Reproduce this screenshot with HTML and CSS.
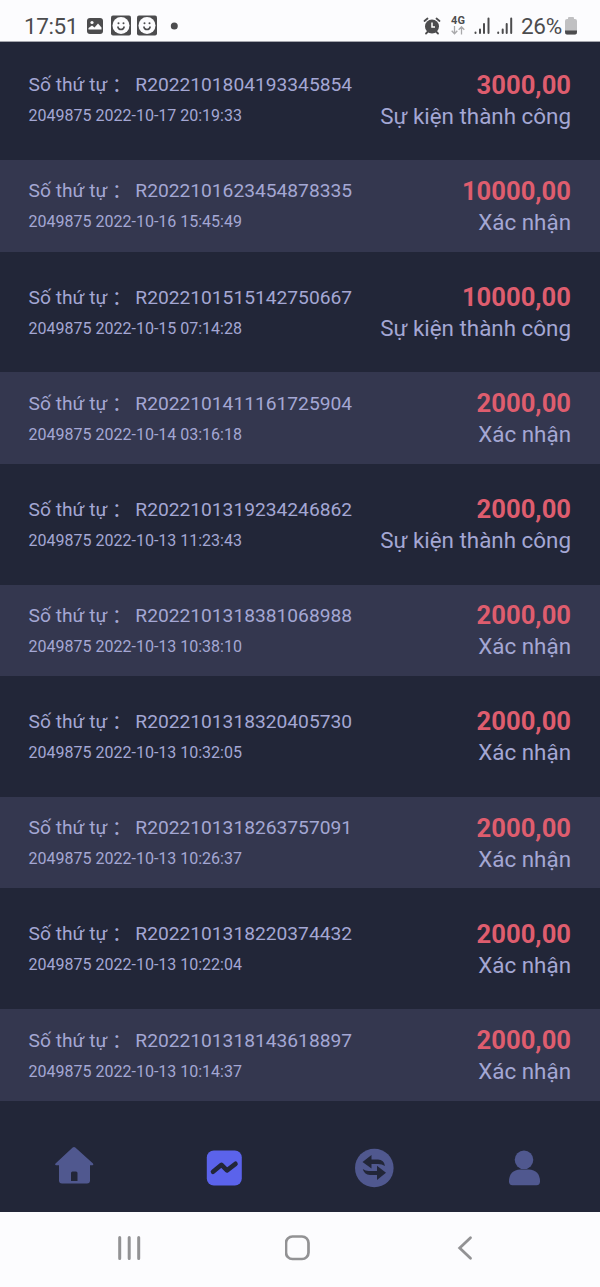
FILE: index.html
```html
<!DOCTYPE html>
<html lang="vi">
<head>
<meta charset="utf-8">
<title>Lịch sử</title>
<link rel="stylesheet" href="styles.css">
</head>
<body>
<header class="status">
  <span class="clock">17:51</span>
  <svg class="notices" width="100" height="24" viewBox="0 0 100 24">
    <rect x="1" y="4" width="16" height="16" rx="3" fill="#4c4c4e"/>
    <circle cx="6" cy="8.5" r="1.6" fill="#fcfcfe"/>
    <path d="M2.500 15.500V14L6 11.500L8.500 13.500L12 9.500L15.500 13.500V15.500Z" fill="#fcfcfe"/>
    <g id="face">
      <rect x="25" y="1.500" width="20" height="20" rx="2" fill="#4c4c4e"/>
      <circle cx="35" cy="11.500" r="8.500" fill="#fcfcfe"/>
      <circle cx="32.500" cy="9.300" r="1" fill="#4c4c4e"/>
      <circle cx="37.500" cy="9.300" r="1" fill="#4c4c4e"/>
      <path d="M31.700 12.500Q32.300 15.500 35 15.500T38.300 12.500" fill="none" stroke="#4c4c4e" stroke-width="1.500"/>
    </g>
    <use href="#face" x="26"/>
    <circle cx="88.300" cy="12" r="3.500" fill="#4c4c4e"/>
  </svg>
  <svg class="alarm" width="18" height="18" viewBox="0 0 18 18">
    <g fill="none" stroke="#4c4c4e" stroke-width="1.800" stroke-linecap="round"><path d="M1.500 4L4.500 1.500M16.500 4L13.500 1.500M3 16.500L5.500 14M15 16.500L12.500 14"/></g>
    <circle cx="9" cy="9.500" r="7" fill="#4c4c4e"/>
    <path d="M9 5.500V10H12" fill="none" stroke="#fff" stroke-width="1.500"/>
  </svg>
  <div class="network"><b>4G</b>
    <svg width="14" height="9" viewBox="0 0 14 9"><path d="M3.500 0V7.500M.700 4.700L3.500 7.700L6.300 4.700M10.500 8.500V1M7.700 3.800L10.500 .800L13.300 3.800" fill="none" stroke="#a9a9ab" stroke-width="1.300"/></svg>
  </div>
  <svg class="signal" width="40" height="18" viewBox="0 0 40 18">
    <g id="bars" fill="none" stroke="#4c4c4e" stroke-width="2" stroke-linecap="round"><path d="M1.500 15.500V16M6 12.500V16M10 7V16M14.500 1.500V16"/></g>
    <use href="#bars" x="22.700"/>
  </svg>
  <span class="percent">26%</span>
  <svg class="battery" width="12" height="18" viewBox="0 0 12 18">
    <path d="M4 0H8Q9 0 9 1V2H10Q12 2 12 4V15Q12 17.500 10 17.500H2Q0 17.500 0 15V4Q0 2 2 2H3V1Q3 0 4 0Z" fill="#c0c0c2"/>
    <path d="M0 13.500H12V15Q12 17.500 10 17.500H2Q0 17.500 0 15Z" fill="#4c4c4e"/>
  </svg>
</header>
<main class="list">
  <div class="row"><div class="order"><p class="code">Số thứ tự<i>：</i><span>R2022101804193345854</span></p><p class="date">2049875 2022-10-17 20:19:33</p></div><div class="result"><b>3000,00</b><p>Sự kiện thành công</p></div></div>
  <div class="row"><div class="order"><p class="code">Số thứ tự<i>：</i><span>R2022101623454878335</span></p><p class="date">2049875 2022-10-16 15:45:49</p></div><div class="result"><b>10000,00</b><p>Xác nhận</p></div></div>
  <div class="row"><div class="order"><p class="code">Số thứ tự<i>：</i><span>R2022101515142750667</span></p><p class="date">2049875 2022-10-15 07:14:28</p></div><div class="result"><b>10000,00</b><p>Sự kiện thành công</p></div></div>
  <div class="row"><div class="order"><p class="code">Số thứ tự<i>：</i><span>R2022101411161725904</span></p><p class="date">2049875 2022-10-14 03:16:18</p></div><div class="result"><b>2000,00</b><p>Xác nhận</p></div></div>
  <div class="row"><div class="order"><p class="code">Số thứ tự<i>：</i><span>R2022101319234246862</span></p><p class="date">2049875 2022-10-13 11:23:43</p></div><div class="result"><b>2000,00</b><p>Sự kiện thành công</p></div></div>
  <div class="row"><div class="order"><p class="code">Số thứ tự<i>：</i><span>R2022101318381068988</span></p><p class="date">2049875 2022-10-13 10:38:10</p></div><div class="result"><b>2000,00</b><p>Xác nhận</p></div></div>
  <div class="row"><div class="order"><p class="code">Số thứ tự<i>：</i><span>R2022101318320405730</span></p><p class="date">2049875 2022-10-13 10:32:05</p></div><div class="result"><b>2000,00</b><p>Xác nhận</p></div></div>
  <div class="row"><div class="order"><p class="code">Số thứ tự<i>：</i><span>R2022101318263757091</span></p><p class="date">2049875 2022-10-13 10:26:37</p></div><div class="result"><b>2000,00</b><p>Xác nhận</p></div></div>
  <div class="row"><div class="order"><p class="code">Số thứ tự<i>：</i><span>R2022101318220374432</span></p><p class="date">2049875 2022-10-13 10:22:04</p></div><div class="result"><b>2000,00</b><p>Xác nhận</p></div></div>
  <div class="row"><div class="order"><p class="code">Số thứ tự<i>：</i><span>R2022101318143618897</span></p><p class="date">2049875 2022-10-13 10:14:37</p></div><div class="result"><b>2000,00</b><p>Xác nhận</p></div></div>
</main>
<nav class="tabs">
  <a class="tab"><svg width="40" height="42" viewBox="0 0 40 42"><path d="M18.700 1.500Q20 .300 21.300 1.500L39 17.500Q40 19.200 38.500 19.200H36V34.500Q36 37.500 33 37.500H8Q5 37.500 5 34.500V19.200H2Q.400 19.200 1.500 17.500ZM18.500 25.500Q17 25.500 17 27V35H23.500V27Q23.500 25.500 22 25.500Z" fill="#50588f" fill-rule="evenodd"/></svg></a>
  <a class="tab"><svg width="40" height="42" viewBox="0 0 40 42"><rect x="2.800" y="4.500" width="35" height="35" rx="7" fill="#5b63eb"/><path d="M9 25.800L17.500 18.800L23 24.300L31.500 17.800" fill="none" stroke="#222638" stroke-width="4.600" stroke-linecap="round" stroke-linejoin="round"/></svg></a>
  <a class="tab"><svg width="40" height="42" viewBox="0 0 40 42"><circle cx="20.300" cy="22" r="19.300" fill="#50588f"/><path d="M8.500 16L17.500 9V13.500H24Q30 13.500 31 20Q28 18 24 18H17.500V22.500ZM32 26.700L23 34V29H16Q10 28.500 8.800 23Q12 25.500 16 25H23V19.800Z" fill="#222638"/></svg></a>
  <a class="tab"><svg width="40" height="42" viewBox="0 0 40 42"><circle cx="20" cy="13.800" r="9.300" fill="#50588f"/><path d="M5 35.500Q5 24 16.500 23.500H24.500Q36 24 36 35.500Q36 39.200 32.500 39.200H8.500Q5 39.200 5 35.500Z" fill="#50588f"/></svg></a>
</nav>
<footer class="system">
  <svg width="26" height="28" viewBox="0 0 26 28"><path d="M3.700 3.500V24.500M13.200 3.500V24.500M22.700 3.500V24.500" stroke="#929294" stroke-width="3" stroke-linecap="round"/></svg>
  <svg width="26" height="28" viewBox="0 0 26 28"><rect x="1" y="2.500" width="22.500" height="22.500" rx="6.500" fill="none" stroke="#929294" stroke-width="2.700"/></svg>
  <svg width="26" height="28" viewBox="0 0 26 28"><path d="M17.500 3.800L6.700 14L17.500 24.300" fill="none" stroke="#929294" stroke-width="2.800" stroke-linecap="round"/></svg>
</footer>
</body>
</html>
```
FILE: styles.css
```css
* { box-sizing: border-box; }
body {
  margin: 0;
  width: 600px;
  height: 1287px;
  display: flex;
  flex-direction: column;
  overflow: hidden;
  background: #222638;
  font-family: Roboto, "Noto Sans CJK TC", sans-serif;
  color: #a4a7d4;
}
p { margin: 0; }
svg { display: block; flex: none; }

.status {
  height: 42px;
  flex: none;
  display: flex;
  align-items: center;
  padding: 10px 23px 0 24px;
  background: #fcfcfe;
  border-bottom: 1px solid #a4a5ad;
  color: #4c4c4e;
  font-size: 22.5px;
  line-height: 30px;
}
.clock { width: 62px; letter-spacing: -0.4px; }
.notices { margin-right: 237px; }
.alarm { margin-right: 9px; }
.network {
  width: 16px;
  margin-right: 8px;
  display: flex;
  flex-direction: column;
  align-items: center;
  font-size: 11px;
  line-height: 10px;
}
.signal { margin-right: 7px; }
.percent { width: 44px; letter-spacing: -0.3px; }

.list {
  display: flex;
  flex-direction: column;
  gap: 14.55px;
  height: 1058.6px;
  flex: none;
}
.row {
  height: 91.6px;
  flex: none;
  display: flex;
  justify-content: space-between;
  padding: 15.8px 29px 0 28.6px;
}
.row:first-child { height: 103.4px; padding-top: 27.6px; }
.row:nth-child(even) {
  background: #34374f;
}
.order { padding-top: 0.7px; }
.code {
  display: flex;
  font-size: 19.2px;
  line-height: 30px;
}
.code i {
  width: 28px;
  font-family: "Noto Sans CJK TC", sans-serif;
  font-style: normal;
}
.date { font-size: 16px; line-height: 31px; }
.result { text-align: right; }
.result b {
  display: block;
  color: #de5d6e;
  font-size: 25.6px;
  line-height: 30px;
}
.result p { font-size: 22.4px; line-height: 33px; }

.tabs {
  margin: 45.4px 1px 0 -1px;
  height: 66px;
  flex: none;
  display: grid;
  grid-template-columns: repeat(4, 1fr);
  justify-items: center;
}
.system {
  flex: 1;
  display: flex;
  justify-content: space-between;
  align-items: center;
  padding: 0 121px 3px 116px;
  background: #fcfcfe;
}
```
